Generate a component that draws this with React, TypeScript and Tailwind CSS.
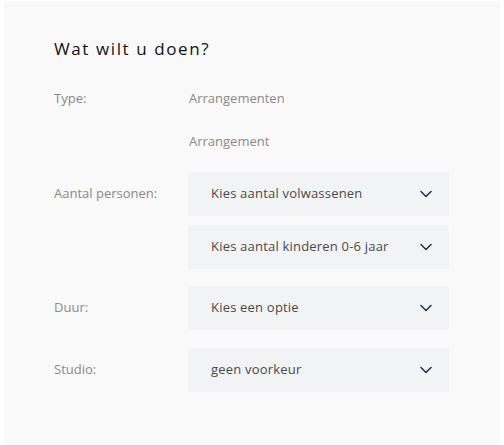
import type { ReactNode } from 'react';

const font = { fontFamily: '"Open Sans", "Noto Sans", Arial, sans-serif' };

function Chevron(): JSX.Element {
  return (
    <svg width="12" height="8" viewBox="0 0 12 8" fill="none" className="shrink-0">
      <path d="M1 1.5 L6 6.5 L11 1.5" stroke="#2f3640" strokeWidth="1.6" strokeLinecap="round" strokeLinejoin="round" />
    </svg>
  );
}

function Select({ label }: { label: string }): JSX.Element {
  return (
    <div className="flex h-[44px] w-[261px] items-center justify-between bg-[#f2f3f5] pl-[23px] pr-[17px]">
      <span className="text-[13px] tracking-[0.2px] text-[#4a4a4a]">{label}</span>
      <Chevron />
    </div>
  );
}

function Row({ label, children, className = '' }: { label?: string; children: ReactNode; className?: string }): JSX.Element {
  return (
    <div className={`flex ${className}`}>
      <div className="flex h-[44px] w-[134px] shrink-0 items-center text-[13px] text-[#8a8a8a]">{label}</div>
      <div className="flex flex-col gap-[9px]">{children}</div>
    </div>
  );
}

export default function App(): JSX.Element {
  return (
    <div className="h-[445px] w-[504px] bg-white pt-[1px] pl-[4px] pr-[4px]" style={font}>
      <div className="h-[444px] bg-[#f9f9f9] px-[50px] pt-[38px]">
        <h2 className="text-[17px] leading-[20px] tracking-[1.6px] text-[#111]">Wat wilt u doen?</h2>

        <div className="mt-[30px] flex h-[20px] items-center text-[13px] text-[#8a8a8a]">
          <span className="w-[135px]">Type:</span>
          <span>Arrangementen</span>
        </div>
        <div className="mt-[23px] flex h-[20px] items-center text-[13px] text-[#8a8a8a]">
          <span className="w-[135px]" />
          <span>Arrangement</span>
        </div>

        <Row label="Aantal personen:" className="mt-[20px]">
          <Select label="Kies aantal volwassenen" />
          <Select label="Kies aantal kinderen 0-6 jaar" />
        </Row>

        <Row label="Duur:" className="mt-[17px]">
          <Select label="Kies een optie" />
        </Row>

        <Row label="Studio:" className="mt-[18px]">
          <Select label="geen voorkeur" />
        </Row>
      </div>
    </div>
  );
}
